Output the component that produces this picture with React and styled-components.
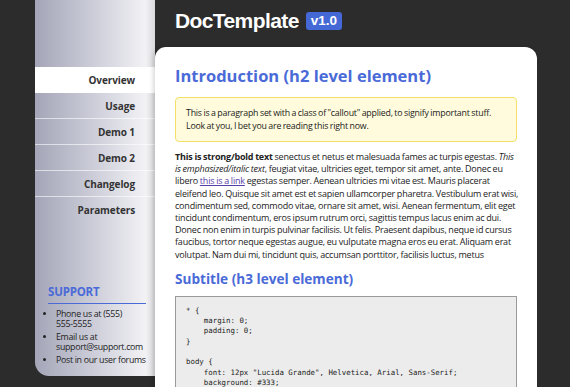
import styled, { createGlobalStyle } from "styled-components";

const Global = createGlobalStyle`
    html, body {
        margin: 0;
        padding: 0;
        background: #2c2c2c;
        overflow: hidden;
    }
    body {
        font-family: "Open Sans", "DejaVu Sans", sans-serif;
    }
`;

const Page = styled.div`
    display: flex;
    align-items: flex-start;
    padding-left: 35px;
    height: 387px;
`;

const Sidebar = styled.aside`
    display: flex;
    flex-direction: column;
    width: 120px;
    height: 376px;
    border-bottom-left-radius: 14px;
    background: linear-gradient(to right, #a4a6b8 0%, #c9cad6 45%, #f2f2f5 92%, #d9d9de 100%);
    padding-top: 67px;
    box-sizing: border-box;
`;

const Nav = styled.ul`
    list-style: none;
    margin: 0;
    padding: 0;
`;

const NavItem = styled.li`
    height: 26px;
    line-height: 26px;
    padding-right: 20px;
    text-align: right;
    font-size: 10px;
    font-weight: bold;
    letter-spacing: -0.1px;
    color: #333;
    background: ${({ $active }) => ($active ? "#fff" : "transparent")};
    border-bottom: ${({ $last }) => ($last ? "none" : "1px solid rgba(255,255,255,0.6)")};
    box-sizing: border-box;
`;

const Support = styled.div`
    margin-top: auto;
    padding: 0 8px 9px 13px;
`;

const SupportTitle = styled.h4`
    margin: 0;
    padding-bottom: 4px;
    font-size: 11.5px;
    font-weight: bold;
    letter-spacing: -0.2px;
    color: #4a6ad8;
    border-bottom: 1px solid #4a6ad8;
    width: 98px;
`;

const SupportList = styled.ul`
    margin: 5px 0 0;
    padding-left: 8px;
    font-size: 8.8px;
    letter-spacing: -0.3px;
    line-height: 10.5px;
    white-space: nowrap;
    color: #222;

    li {
        margin-bottom: 2px;
    }
`;

const Main = styled.div`
    display: flex;
    flex-direction: column;
    width: 382px;
`;

const Header = styled.header`
    display: flex;
    align-items: center;
    gap: 7px;
    height: 47px;
    padding: 0 0 6px 20px;
    box-sizing: border-box;
`;

const Logo = styled.h1`
    margin: 0;
    font-family: "Liberation Sans", Arial, sans-serif;
    font-size: 21px;
    font-weight: bold;
    letter-spacing: -0.6px;
    color: #fff;
`;

const Badge = styled.span`
    display: inline-block;
    padding: 0 5px;
    height: 18px;
    line-height: 18px;
    font-family: "Liberation Sans", Arial, sans-serif;
    font-size: 13.5px;
    font-weight: bold;
    color: #fff;
    background: #4468d6;
    border-radius: 3px;
`;

const Content = styled.main`
    background: #fff;
    border-radius: 11px 12px 0 0;
    padding: 17px 20px 0;
    min-height: 340px;
    box-shadow: -2px 0 4px rgba(0, 0, 0, 0.15);
`;

const H2 = styled.h2`
    margin: 0 0 9px;
    font-size: 16.5px;
    line-height: 24px;
    font-weight: bold;
    color: #4a6ad8;
`;

const Callout = styled.p`
    margin: 0 0 9px;
    padding: 9px 10px 8px;
    background: #fffbdc;
    border: 1px solid #f2e06a;
    border-radius: 4px;
    font-size: 8.8px;
    letter-spacing: -0.2px;
    word-spacing: -0.5px;
    line-height: 13px;
    white-space: nowrap;
    color: #222;
`;

const Para = styled.p`
    margin: 0 0 8px;
    font-size: 9px;
    letter-spacing: -0.2px;
    word-spacing: -0.3px;
    line-height: 12.2px;
    white-space: nowrap;
    color: #222;

    a {
        color: #5a3ea8;
    }
`;

const H3 = styled.h3`
    margin: 0 0 7px;
    font-size: 13.6px;
    line-height: 20px;
    font-weight: bold;
    color: #4a6ad8;
`;

const Code = styled.pre`
    margin: 0;
    padding: 9px 10px;
    background: #ececec;
    border: 1px solid #9a9a9a;
    font-family: "DejaVu Sans Mono", "Liberation Mono", monospace;
    font-size: 7.4px;
    line-height: 10.3px;
    color: #222;
`;

const code = `* {
    margin: 0;
    padding: 0;
}

body {
    font: 12px "Lucida Grande", Helvetica, Arial, Sans-Serif;
    background: #333;
}`;

const navItems = ["Overview", "Usage", "Demo 1", "Demo 2", "Changelog", "Parameters"];

export default function App() {
    return (
        <>
            <Global />
            <Page>
                <Sidebar>
                    <Nav>
                        {navItems.map((item, i) => (
                            <NavItem key={item} $active={i === 0} $last={i === navItems.length - 1}>
                                {item}
                            </NavItem>
                        ))}
                    </Nav>
                    <Support>
                        <SupportTitle>SUPPORT</SupportTitle>
                        <SupportList>
                            <li>Phone us at (555)<br />555-5555</li>
                            <li>Email us at<br />support@support.com</li>
                            <li>Post in our user forums</li>
                        </SupportList>
                    </Support>
                </Sidebar>
                <Main>
                    <Header>
                        <Logo>DocTemplate</Logo>
                        <Badge>v1.0</Badge>
                    </Header>
                    <Content>
                        <H2>Introduction (h2 level element)</H2>
                        <Callout>
                            This is a paragraph set with a class of "callout" applied, to signify important stuff.<br />
                            Look at you, I bet you are reading this right now.
                        </Callout>
                        <Para>
                            <strong>This is strong/bold text</strong> senectus et netus et malesuada fames ac turpis egestas. <em>This</em><br />
                            <em>is emphasized/italic text</em>, feugiat vitae, ultricies eget, tempor sit amet, ante. Donec eu<br />
                            libero <a href="#">this is a link</a> egestas semper. Aenean ultricies mi vitae est. Mauris placerat<br />
                            eleifend leo. Quisque sit amet est et sapien ullamcorper pharetra. Vestibulum erat wisi,<br />
                            condimentum sed, commodo vitae, ornare sit amet, wisi. Aenean fermentum, elit eget<br />
                            tincidunt condimentum, eros ipsum rutrum orci, sagittis tempus lacus enim ac dui.<br />
                            Donec non enim in turpis pulvinar facilisis. Ut felis. Praesent dapibus, neque id cursus<br />
                            faucibus, tortor neque egestas augue, eu vulputate magna eros eu erat. Aliquam erat<br />
                            volutpat. Nam dui mi, tincidunt quis, accumsan porttitor, facilisis luctus, metus
                        </Para>
                        <H3>Subtitle (h3 level element)</H3>
                        <Code>{code}</Code>
                    </Content>
                </Main>
            </Page>
        </>
    );
}
